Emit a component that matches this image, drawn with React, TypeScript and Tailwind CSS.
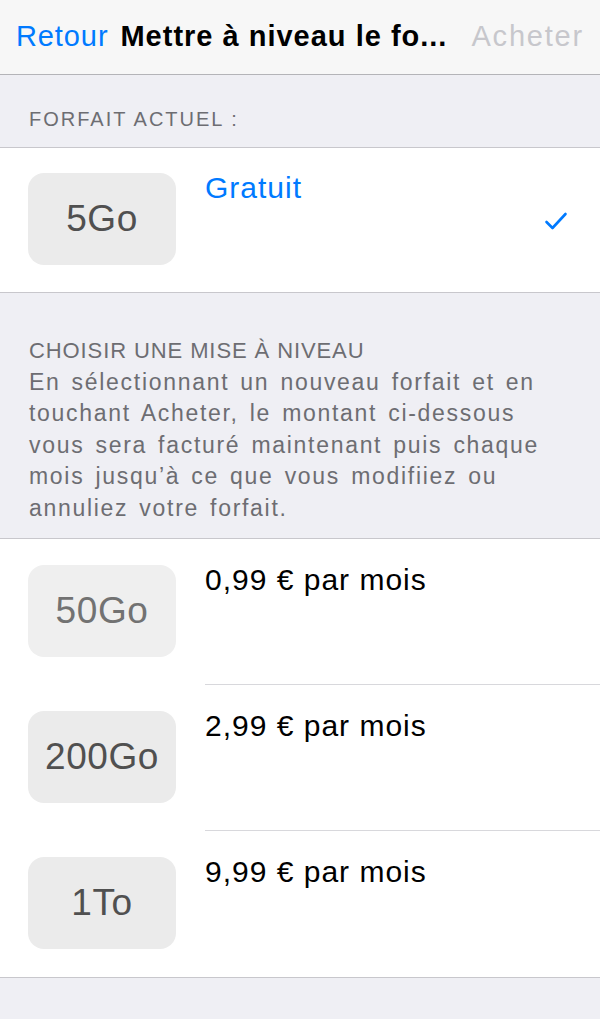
import React from "react";

const plans = [
  { size: "50Go", price: "0,99 € par mois", light: true },
  { size: "200Go", price: "2,99 € par mois", light: false },
  { size: "1To", price: "9,99 € par mois", light: false },
];

function SizeBox({ label, light }: { label: string; light?: boolean }) {
  return (
    <div
      className={
        "w-[148px] h-[92px] shrink-0 rounded-[16px] flex items-center justify-center text-[37px] tracking-[0.6px] " +
        (light ? "bg-[#efefef] text-[#727272]" : "bg-[#ebebeb] text-[#505050]")
      }
    >
      {label}
    </div>
  );
}

export default function App() {
  return (
    <div
      className="w-[600px] min-h-[1019px] bg-[#efeff4] flex flex-col"
      style={{ fontFamily: '"Liberation Sans", Arial, sans-serif' }}
    >
      {/* Nav bar */}
      <div className="h-[75px] bg-[#f7f7f7] border-b border-[#b4b4b8] flex items-center pl-[16px] pr-[16px] text-[29px] tracking-[0.9px]">
        <span className="text-[#007aff]">Retour</span>
        <span className="ml-[12px] font-bold text-black whitespace-nowrap tracking-[1px]">Mettre à niveau le fo...</span>
        <span className="ml-auto text-[#c7c7cc] tracking-[1.8px]">Acheter</span>
      </div>

      {/* Current plan header */}
      <div className="h-[73px] border-b border-[#c8c7cc] flex items-end px-[29px] pb-[13px] text-[20px] tracking-[2px] text-[#6d6d72]">
        FORFAIT ACTUEL :
      </div>

      {/* Current plan row */}
      <div className="bg-white h-[145px] border-b border-[#c8c7cc] flex pl-[28px] pr-[32px] pt-[25px]">
        <SizeBox label="5Go" />
        <div className="ml-[29px] flex-1 flex">
          <span className="text-[30px] tracking-[1px] text-[#007aff] leading-[30px]">Gratuit</span>
          <svg className="ml-auto mt-[38px]" width="24" height="20" viewBox="0 0 24 20">
            <path d="M2.5 11 L8.5 17 L21.5 3" fill="none" stroke="#007aff" strokeWidth="2.6" strokeLinecap="round" strokeLinejoin="round" />
          </svg>
        </div>
      </div>

      {/* Upgrade header */}
      <div className="h-[246px] border-b border-[#c8c7cc] px-[29px] pt-[42px] text-[23px] leading-[31.5px] text-[#6d6d72]">
        <div className="text-[22px] tracking-[0.9px]">CHOISIR UNE MISE À NIVEAU</div>
        <div className="w-[525px] tracking-[1.7px] [word-spacing:3px]">
          En sélectionnant un nouveau forfait et en touchant Acheter, le montant ci-dessous vous sera facturé
          maintenant puis chaque mois jusqu’à ce que vous modifiiez ou annuliez votre forfait.
        </div>
      </div>

      {/* Upgrade rows */}
      <div className="bg-white border-b border-[#c8c7cc] pl-[28px]">
        {plans.map((p, i) => (
          <div key={p.size} className="h-[146px] flex relative pt-[26px]">
            <SizeBox label={p.size} light={p.light} />
            <span className="ml-[29px] text-[30px] tracking-[1px] leading-[30px] text-black">{p.price}</span>
            {i < plans.length - 1 && (
              <div className="absolute left-[177px] right-0 bottom-0 h-px bg-[#d8d8dc]" />
            )}
          </div>
        ))}
      </div>
    </div>
  );
}
